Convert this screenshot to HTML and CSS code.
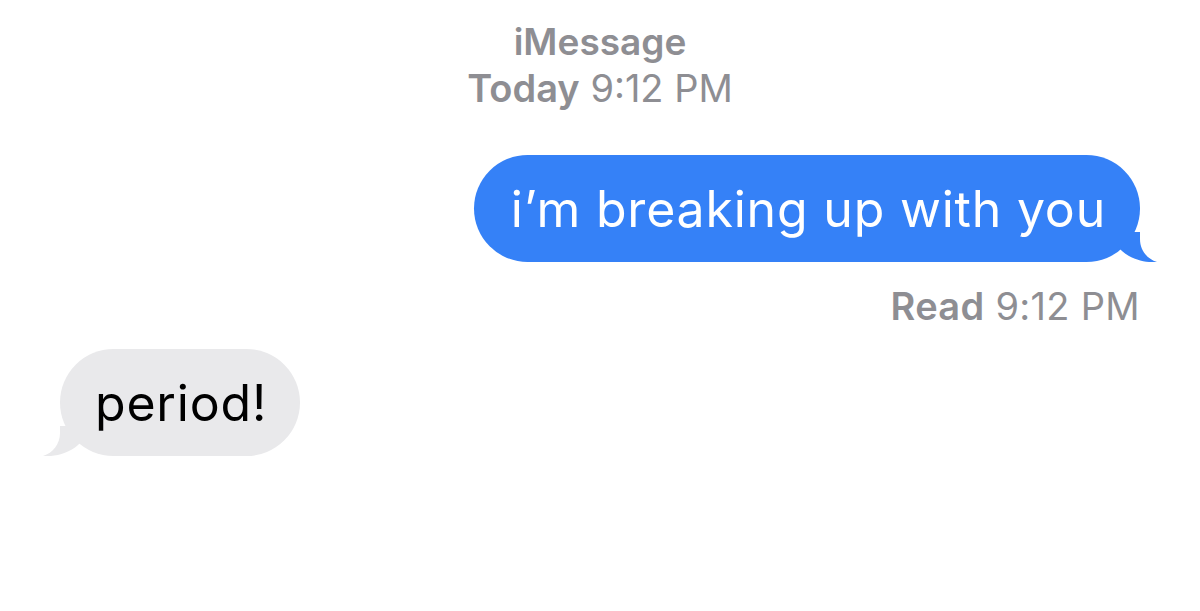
FILE: index.html
```html
<!DOCTYPE html>
<html lang="en">
<head>
    <meta charset="UTF-8">
    <meta name="viewport" content="width=device-width, initial-scale=1.0">
    <title>Messages</title>
    <link rel="stylesheet" href="styles.css">
</head>
<body>

    <div class="thread">
        <div class="thread-head">
            <div class="service">iMessage</div>
            <div class="stamp"><b>Today</b> 9:12 PM</div>
        </div>

        <div class="row row-out">
            <div class="bubble bubble-out">
                i’m breaking up with you
                <svg class="tail tail-out" width="40" height="30" viewBox="0 0 40 30">
                    <path d="M0 0 H23 V7 C23 18 30 27 40 30 C30 31 15 28 5 19 L0 14 Z" fill="#3581f7"/>
                </svg>
            </div>
        </div>
        <div class="status"><b>Read</b> 9:12 PM</div>

        <div class="row row-in">
            <div class="bubble bubble-in">
                period!
                <svg class="tail tail-in" width="40" height="30" viewBox="0 0 40 30">
                    <path d="M40 0 H17 V7 C17 18 10 27 0 30 C10 31 25 28 35 19 L40 14 Z" fill="#e9e9eb"/>
                </svg>
            </div>
        </div>
    </div>

</body>
</html>
```

FILE: styles.css
```css
body {
    margin: 0;
    background: #ffffff;
    font-family: Inter, "Liberation Sans", sans-serif;
}
.thread {
    display: flex;
    flex-direction: column;
    padding-top: 18px;
}
.thread-head {
    text-align: center;
    color: #8e8e93;
    line-height: 47px;
}
.service {
    font-size: 37px;
    font-weight: 600;
}
.stamp {
    font-size: 38px;
}
.stamp b,
.status b {
    font-weight: 600;
}
.row {
    display: flex;
}
.row-out {
    justify-content: flex-end;
    padding-right: 60px;
    margin-top: 43px;
}
.row-in {
    padding-left: 60px;
    margin-top: 19px;
}
.bubble {
    position: relative;
    height: 107px;
    display: flex;
    align-items: center;
    border-radius: 54px;
    font-size: 50px;
    letter-spacing: 0.8px;
}
.bubble-out {
    background: #3581f7;
    color: #ffffff;
    padding: 0 34px 0 37px;
}
.bubble-in {
    background: #e9e9eb;
    color: #000000;
    padding: 0 33px 0 35px;
}
.tail {
    position: absolute;
    bottom: 0;
}
.tail-out {
    right: -17px;
}
.tail-in {
    left: -17px;
}
.status {
    text-align: right;
    padding-right: 60px;
    margin-top: 21px;
    color: #8e8e93;
    font-size: 38px;
    line-height: 47px;
    letter-spacing: 0.3px;
}
```
